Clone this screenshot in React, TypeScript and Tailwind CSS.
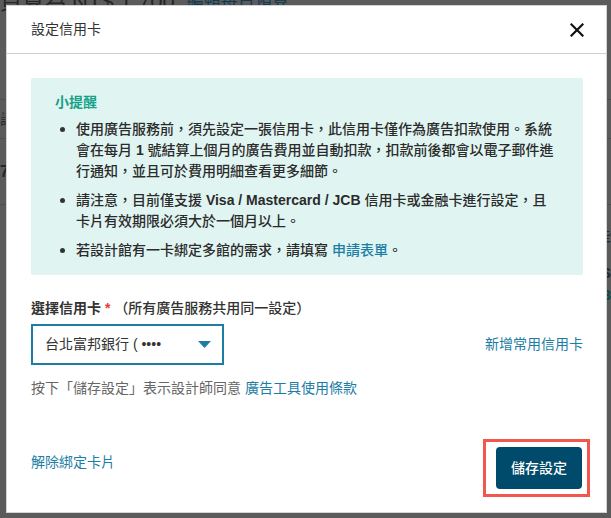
import React from 'react';

const font = { fontFamily: '"Liberation Sans", "Noto Sans CJK TC", sans-serif' };

function BackgroundPage() {
  // page behind the dimmed overlay
  return (
    <div className="w-full h-full bg-[#5b5b5b] text-[#262626]">
      <div className="h-[5px] overflow-visible flex items-end pl-0">
        <span className="text-[22px] leading-none -mb-[8px] whitespace-nowrap">頁算為 NT$ 1,700</span>
        <span className="text-[17px] leading-none -mb-[5px] ml-3 text-[#103a50] whitespace-nowrap">編輯每日預算</span>
      </div>
      <div className="h-[95px] border-b border-[#4d4d4d]" />
      <div className="h-[39px] border-b border-[#4d4d4d] flex items-center text-[14px]">詞</div>
      <div className="h-[66px] border-b border-[#4d4d4d] flex items-center text-[16px] font-bold">7</div>
      <div className="flex justify-end pr-0 text-[15px] mt-[20px]">
        <div className="flex flex-col items-end gap-[14px]">
          <span>些</span>
          <span className="font-bold">S</span>
          <span className="text-[#0f4a3c] font-bold -mt-[14px]">3</span>
        </div>
      </div>
    </div>
  );
}

function Caret() {
  return (
    <svg width="13" height="7" viewBox="0 0 13 7" className="shrink-0">
      <path d="M0 0 H13 L6.5 7 Z" fill="#1c7ea5" />
    </svg>
  );
}

function CloseIcon() {
  return (
    <svg width="14" height="14" viewBox="0 0 14 14">
      <path d="M1.5 1.5 L12.5 12.5 M12.5 1.5 L1.5 12.5" stroke="#111" strokeWidth="2.2" strokeLinecap="square" />
    </svg>
  );
}

export default function App() {
  const tips = [
    <>使用廣告服務前，須先設定一張信用卡，此信用卡僅作為廣告扣款使用。系統會在每月 <b>1</b> 號結算上個月的廣告費用並自動扣款，扣款前後都會以電子郵件進行通知，並且可於費用明細查看更多細節。</>,
    <>請注意，目前僅支援 <b>Visa / Mastercard / JCB</b> 信用卡或金融卡進行設定，且卡片有效期限必須大於一個月以上。</>,
    <>若設計館有一卡綁定多館的需求，請填寫 <span className="text-[#1c7ea5]">申請表單</span>。</>,
  ];

  return (
    <div className="relative w-[611px] h-[518px] overflow-hidden" style={font}>
      <BackgroundPage />

      {/* Modal layer */}
      <div className="absolute inset-0 pt-[5px] pl-[6px]">
        <div className="w-[601px] h-[508px] bg-white border border-[#d4d4d4] flex flex-col">
          {/* Header */}
          <div className="h-[48px] shrink-0 flex items-center justify-between pl-[24px] pr-[22px] border-b border-[#cfcfcf]">
            <h2 className="text-[14px] text-[#333] leading-[21px]">設定信用卡</h2>
            <CloseIcon />
          </div>

          {/* Body */}
          <div className="pt-[24px] pl-[24px] pr-[23px]">
            <div className="bg-[#e0f5f2] rounded-[2px] pl-[24px] pr-[24px] pt-[14px] pb-[14px]">
              <p className="text-[14px] leading-[21px] font-bold text-[#17a088]">小提醒</p>
              <ul className="mt-[6px] flex flex-col gap-[8px]">
                {tips.map((t, i) => (
                  <li key={i} className="flex text-[14px] leading-[21px] font-medium text-[#2b2b2b]">
                    <span className="w-[21px] shrink-0 pt-[8px] pl-[5px]">
                      <span className="block w-[5px] h-[5px] rounded-full bg-[#333]" />
                    </span>
                    <span>{t}</span>
                  </li>
                ))}
              </ul>
            </div>

            <div className="mt-[23px]">
              <p className="text-[14px] leading-[21px] font-bold text-[#333]">
                選擇信用卡 <span className="text-[#e53935]">*</span>{' '}
                <span className="font-medium">（所有廣告服務共用同一設定）</span>
              </p>
              <div className="mt-[5px] flex items-center justify-between">
                <div className="w-[193px] h-[41px] border-2 border-[#1c7ea5] flex items-center justify-between pl-[12px] pr-[11px]">
                  <span className="text-[14px] text-[#333]">台北富邦銀行 ( ••••</span>
                  <Caret />
                </div>
                <a className="text-[14px] text-[#1c7ea5]">新增常用信用卡</a>
              </div>
              <p className="mt-[13px] text-[14px] leading-[21px] text-[#666]">
                按下「儲存設定」表示設計師同意 <span className="text-[#1c7ea5]">廣告工具使用條款</span>
              </p>
            </div>
          </div>

          {/* Footer */}
          <div className="mt-auto flex items-end justify-between pl-[24px] pr-[24px] pb-[23px]">
            <a className="text-[14px] leading-[21px] text-[#1c7ea5] mb-[16px]">解除綁定卡片</a>
            <div className="relative">
              <button className="w-[86px] h-[42px] rounded-[4px] bg-[#004b6b] text-white text-[14px] font-medium">
                儲存設定
              </button>
              <div className="absolute -left-[13px] -right-[8px] -top-[8px] -bottom-[8px] border-[3px] border-[#f2574d] pointer-events-none" />
            </div>
          </div>
        </div>
      </div>
    </div>
  );
}
